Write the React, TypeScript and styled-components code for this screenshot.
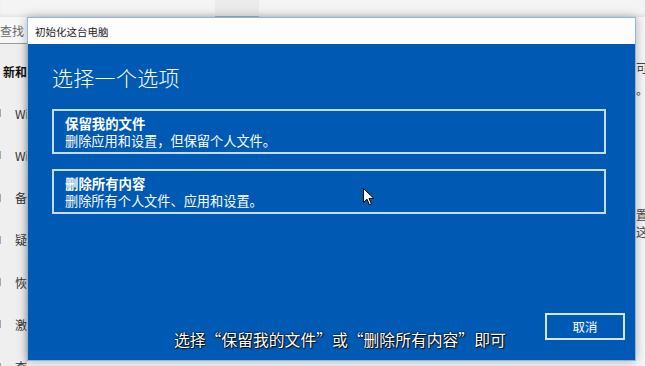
import React from 'react';
import styled, { createGlobalStyle } from 'styled-components';

const GlobalStyle = createGlobalStyle`
  html, body {
    margin: 0;
    padding: 0;
  }
  body {
    width: 645px;
    height: 366px;
    overflow: hidden;
    background: #f2f2f2;
    font-family: "Noto Sans CJK SC", "Noto Sans", sans-serif;
  }
`;

const Screen = styled.div`
  position: relative;
  width: 645px;
  height: 366px;
  overflow: hidden;
  display: grid;
  grid-template-columns: 27px 1fr 9px;
  grid-template-rows: 17px 1fr;
  background: #f3f3f3;
`;

const TopStrip = styled.div`
  grid-column: 1 / 4;
  display: flex;
  background: #f4f4f4;
  box-shadow: inset 0 -3px 4px -2px rgba(0, 0, 0, 0.1);
`;

const Tab = styled.div`
  margin-left: 215px;
  width: 44px;
  background: #ebebeb;
  border-bottom: 1px solid #a9b3bd;
`;

const SidePanel = styled.div`
  display: flex;
  flex-direction: column;
  background: #efefef;
  box-shadow: inset -4px 0 5px -3px rgba(0, 0, 0, 0.18);
  white-space: nowrap;
  overflow: hidden;

  & > * {
    flex-shrink: 0;
  }
`;

const SearchBox = styled.div`
  height: 26px;
  display: flex;
  align-items: center;
  font-size: 12px;
  color: #6a6a6a;
  border-bottom: 1px solid #9a9a9a;
  background: #f7f7f7;
`;

const SectionTitle = styled.div`
  margin: 19px 0 0 3px;
  font-size: 12px;
  font-weight: 700;
  color: #111;
  line-height: 18px;
`;

const NavList = styled.div`
  display: flex;
  flex-direction: column;
  gap: 24.3px;
  margin-top: 23px;
`;

const NavItem = styled.div`
  display: flex;
  align-items: center;
  height: 18px;
  flex-shrink: 0;
  font-size: 12px;
  color: #333;
`;

const NavIcon = styled.span`
  width: 4px;
  height: 8px;
  border-right: 1px solid #777;
  margin-right: 14px;
  opacity: 0.6;
`;

const RightEdge = styled.div`
  display: flex;
  flex-direction: column;
  background: #f6f6f6;
  overflow: hidden;
  font-size: 12px;
  color: #444;
  line-height: 17px;
  white-space: nowrap;
`;

const EdgeLine = styled.div<{ $top: number }>`
  margin-top: ${p => p.$top}px;
`;

const Dialog = styled.div`
  position: absolute;
  left: 27px;
  top: 17px;
  width: 609px;
  height: 344px;
  display: flex;
  flex-direction: column;
  box-shadow: 0 0 10px rgba(0, 0, 0, 0.28);
  border: 1px solid #8fb6de;
  box-sizing: border-box;
`;

const TitleBar = styled.div`
  height: 26px;
  display: flex;
  align-items: center;
  padding-left: 7px;
  background: #fdfdfd;
  font-size: 10.5px;
  color: #222;
`;

const Body = styled.div`
  flex: 1;
  display: flex;
  flex-direction: column;
  padding: 19px 29px 20px 24px;
  background: #005ab4;
  color: #fff;
`;

const Heading = styled.div`
  font-size: 21px;
  font-weight: 300;
  line-height: 28px;
  letter-spacing: 0.3px;
`;

const Options = styled.div`
  display: flex;
  flex-direction: column;
  gap: 15px;
  margin-top: 18px;
`;

const OptionCard = styled.div`
  border: 2px solid #c4dcf4;
  padding: 3px 11px 2px;
  display: flex;
  flex-direction: column;
`;

const OptionTitle = styled.div`
  font-size: 13.4px;
  font-weight: 700;
  line-height: 18px;
`;

const OptionDesc = styled.div`
  font-size: 13.2px;
  line-height: 18px;
`;

const Footer = styled.div`
  margin-top: auto;
  margin-right: -19px;
  display: flex;
  justify-content: flex-end;
`;

const CancelButton = styled.div`
  width: 80px;
  height: 27px;
  box-sizing: border-box;
  border: 2px solid #d5e6f7;
  display: flex;
  align-items: center;
  justify-content: center;
  font-size: 12.5px;
`;

const Caption = styled.div`
  position: absolute;
  left: 174px;
  top: 329px;
  font-size: 15.8px;
  line-height: 22px;
  color: #fff;
  white-space: nowrap;
  text-shadow: 0 0 2px #000, 0 0 1px #000, 1px 1px 1px rgba(0, 0, 0, 0.8);
`;

const Cursor = styled.svg`
  position: absolute;
  left: 363px;
  top: 188px;
`;

const navLabels = ['Windows 更新', 'Windows 安全中心', '备份', '疑难解答', '恢复', '激活', '查找我的设备'];

export default function App() {
  return (
    <>
      <GlobalStyle />
      <Screen>
        <TopStrip>
          <Tab />
        </TopStrip>
        <SidePanel>
          <SearchBox>查找</SearchBox>
          <SectionTitle>新和</SectionTitle>
          <NavList>
            {navLabels.map(label => (
              <NavItem key={label}>
                <NavIcon />
                {label}
              </NavItem>
            ))}
          </NavList>
        </SidePanel>
        <div />
        <RightEdge>
          <EdgeLine $top={42}>可</EdgeLine>
          <EdgeLine $top={5}>。</EdgeLine>
          <EdgeLine $top={108}>置</EdgeLine>
          <EdgeLine $top={0}>这</EdgeLine>
        </RightEdge>

        <Dialog>
          <TitleBar>初始化这台电脑</TitleBar>
          <Body>
            <Heading>选择一个选项</Heading>
            <Options>
              <OptionCard>
                <OptionTitle>保留我的文件</OptionTitle>
                <OptionDesc>删除应用和设置，但保留个人文件。</OptionDesc>
              </OptionCard>
              <OptionCard>
                <OptionTitle>删除所有内容</OptionTitle>
                <OptionDesc>删除所有个人文件、应用和设置。</OptionDesc>
              </OptionCard>
            </Options>
            <Footer>
              <CancelButton>取消</CancelButton>
            </Footer>
          </Body>
        </Dialog>

        <Caption>选择“保留我的文件”或“删除所有内容”即可</Caption>

        <Cursor width="12" height="18" viewBox="0 0 12 18">
          <path d="M0.5 0.5 L0.5 14.5 L4 11.2 L6.4 16.8 L8.4 15.9 L6 10.4 L10.8 10.4 Z" fill="#fff" stroke="#000" strokeWidth="1" strokeLinejoin="round" />
        </Cursor>
      </Screen>
    </>
  );
}
